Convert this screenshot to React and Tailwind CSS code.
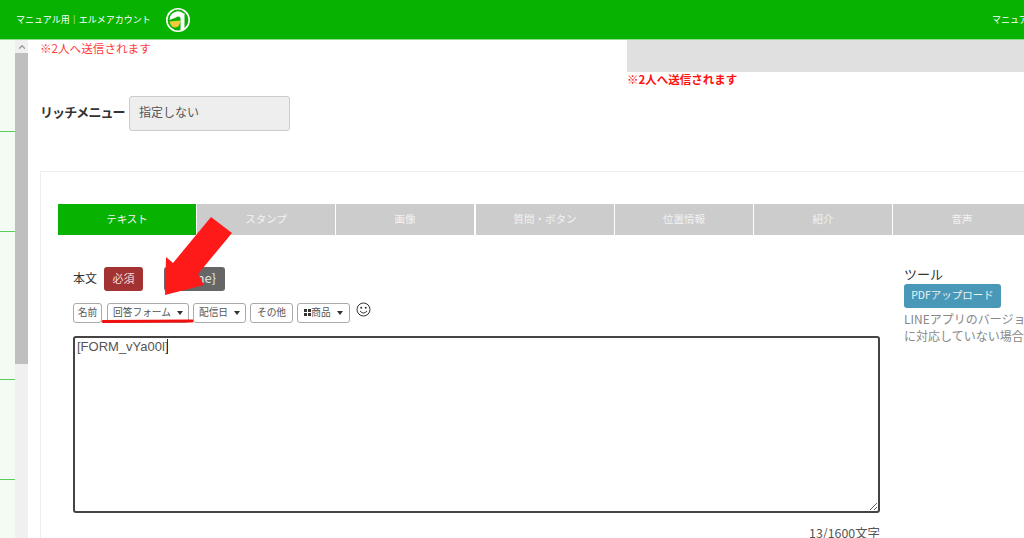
import { ChevronUp } from 'lucide-react';

const jp = { fontFamily: '"Noto Sans CJK JP", "Liberation Sans", sans-serif' };

const tabs = ['テキスト', 'スタンプ', '画像', '質問・ボタン', '位置情報', '紹介', '音声'];

const Logo = () => (
  <svg width="26" height="26" viewBox="0 0 26 26" className="shrink-0">
    <circle cx="13" cy="13" r="11.2" fill="#08b200" stroke="#fff" strokeWidth="1.6" />
    <path d="M4.5 13 A8.5 8.5 0 0 1 18.5 6.5 L19.5 6 L19.5 22 L15.5 23.5 L15.5 11 A3.2 3.2 0 0 0 11 10.5 Z" fill="#fff" />
    <path d="M4.5 14.5 L15.5 13.5 Q15 20 10 20.5 Q6 20.5 4.5 14.5 Z" fill="#f0c93c" />
  </svg>
);

const ToolButton = ({ children, caret, className = '' }) => (
  <div className={`h-5 flex items-center justify-center gap-[6px] bg-white border border-[#aaa] rounded-[3px] text-[9.7px] text-[#555] ${className}`}>
    <span className="flex items-center gap-[5px] pb-[2px]">{children}</span>
    {caret && <span className="w-0 h-0 border-x-[3.5px] border-x-transparent border-t-[4px] border-t-[#333]"></span>}
  </div>
);

const GridIcon = () => (
  <span className="grid grid-cols-2 gap-px mr-[-5px] mt-[2px]">
    <span className="w-[3px] h-[3px] bg-[#333]"></span>
    <span className="w-[3px] h-[3px] bg-[#333]"></span>
    <span className="w-[3px] h-[3px] bg-[#333]"></span>
    <span className="w-[3px] h-[3px] bg-[#333]"></span>
  </span>
);

const Smile = () => (
  <svg width="15" height="15" viewBox="0 0 15 15" fill="none" stroke="#333" strokeWidth="1" className="ml-[2px] mt-[-1px] shrink-0">
    <circle cx="7.5" cy="7.5" r="6.5" />
    <circle cx="5.2" cy="5.8" r="1" fill="#333" stroke="none" />
    <circle cx="9.8" cy="5.8" r="1" fill="#333" stroke="none" />
    <path d="M4 9 Q7.5 13 11 9" />
  </svg>
);

export default function App() {
  return (
    <div className="relative w-[1024px] h-[538px] overflow-hidden bg-white text-[#333] flex flex-col" style={jp}>
      {/* Header */}
      <header className="h-10 shrink-0 bg-[#08b200] border-b border-[#8fdc8a] flex items-center text-white text-[9px]">
        <span className="ml-4 w-[149px] pt-px whitespace-nowrap">マニュアル用｜エルメアカウント</span>
        <Logo />
        <span className="ml-auto w-[32px] pt-px overflow-hidden whitespace-nowrap">マニュア</span>
      </header>

      <div className="flex flex-1 min-h-0">
        {/* Side list */}
        <aside className="w-[15px] shrink-0 bg-[#f3fbf3] flex flex-col">
          <div className="h-[92px] border-b border-[#5ccc5c]"></div>
          <div className="h-[100px] border-b border-[#5ccc5c]"></div>
          <div className="h-[148px] border-b border-[#5ccc5c]"></div>
          <div className="h-[100px] border-b border-[#5ccc5c]"></div>
        </aside>

        {/* Scrollbar */}
        <div className="w-[13px] shrink-0 bg-[#f0f0f0] flex flex-col items-center">
          <ChevronUp size={10} strokeWidth={3} className="text-[#999] mt-[2px] mb-px" />
          <div className="w-full h-[311px] bg-[#bfbfbf]"></div>
        </div>

        {/* Main */}
        <main className="flex-1 min-w-0 overflow-hidden">
          <div className="flex h-[56px]">
            <div className="w-[599px] pl-3 pt-px text-[11.6px] leading-[15px] text-[#ff3b3b]">※2人へ送信されます</div>
            <div className="flex-1">
              <div className="h-[32px] bg-[#e0e0e0]"></div>
              <div className="text-[11.5px] leading-[15px] font-bold text-[#ff1111]">※2人へ送信されます</div>
            </div>
          </div>

          <div className="flex items-center pl-3 h-[35px]">
            <span className="w-[89px] pb-[3px] text-[13px] font-bold text-[#333] whitespace-nowrap tracking-[-0.9px]">リッチメニュー</span>
            <div className="w-[161px] h-[35px] bg-[#eeeeee] border border-[#ccc] rounded-[3px] flex items-center pl-[9px] pb-[3px] text-[12px] text-[#555]">指定しない</div>
          </div>

          {/* Message panel */}
          <section className="mt-[40px] ml-3 w-[1100px] h-[400px] border-l border-t border-[#eeeeee] pt-[32px] pl-[17px]">
            <div className="flex gap-px">
              {tabs.map((tab, i) => (
                <div
                  key={tab}
                  className={`w-[138px] h-[31px] pb-[2px] shrink-0 flex items-center justify-center text-[10.5px] text-[#f2f2f2] ${i === 0 ? 'bg-[#08b200]' : 'bg-[#cccccc]'} ${i === 3 ? 'ml-px' : ''}`}
                >
                  {tab}
                </div>
              ))}
            </div>

            <div className="flex">
              <div className="w-[807px] ml-[15px] shrink-0">
                <div className="flex items-center h-6 mt-8">
                  <span className="w-[31px] pb-[2px] text-[12px] text-[#333]">本文</span>
                  <span className="w-[39px] h-6 pb-[2px] bg-[#a33333] rounded-[3px] flex items-center justify-center text-[#f2dede] text-[11px]">必須</span>
                  <span className="w-[61px] h-6 pb-[2px] ml-[21px] bg-[#666666] rounded-[3px] flex items-center justify-center text-[#e5e5e5] text-[13px]">{'{name}'}</span>
                </div>

                <div className="flex items-start gap-1 mt-3">
                  <ToolButton className="w-[29px]">名前</ToolButton>
                  <ToolButton caret className="w-[82px] ml-px">回答フォーム</ToolButton>
                  <ToolButton caret className="w-[53px]">配信日</ToolButton>
                  <ToolButton className="w-[43px]">その他</ToolButton>
                  <ToolButton caret className="w-[53px]"><GridIcon />商品</ToolButton>
                  <Smile />
                </div>

                <div className="relative mt-[13px]">
                  <textarea
                    readOnly
                    value="[FORM_vYa00l]"
                    className="block w-[807px] h-[177px] border-2 border-[#444] rounded-[3px] px-[2px] py-0 text-[13px] leading-[18px] text-[#555] outline-none resize-y"
                    style={{ fontFamily: '"Liberation Sans", sans-serif' }}
                  />
                  <span className="absolute left-[94px] top-[3px] w-px h-[15px] bg-[#333]"></span>
                </div>

                <div className="text-right text-[12.4px] leading-[10px] text-[#555] mt-[15px]">13/1600文字</div>
              </div>

              <div className="ml-[24px] mt-[31px] w-[300px]">
                <div className="text-[13px] leading-[16px] text-[#333]">ツール</div>
                <div className="w-[97px] h-6 mt-[2px] pb-[2px] bg-[#4a98b8] rounded-[3px] flex items-center justify-center text-[10.5px] text-[#e8f4f8]">PDFアップロード</div>
                <div className="mt-[2px] text-[12px] leading-[17px] text-[#888] whitespace-nowrap">
                  <div>LINEアプリのバージョ</div>
                  <div>に対応していない場合</div>
                </div>
              </div>
            </div>
          </section>
        </main>
      </div>

      {/* Annotation arrow and underline */}
      <svg className="absolute left-0 top-0 pointer-events-none" width="1024" height="538" viewBox="0 0 1024 538">
        <polygon points="165,295 166,257 173,263 211,217 232,233 198,274 204,285" fill="#ff1a1a" />
        <path d="M103 321.5 L192 321" fill="none" stroke="#f01010" strokeWidth="3" strokeLinecap="round" />
      </svg>
    </div>
  );
}
